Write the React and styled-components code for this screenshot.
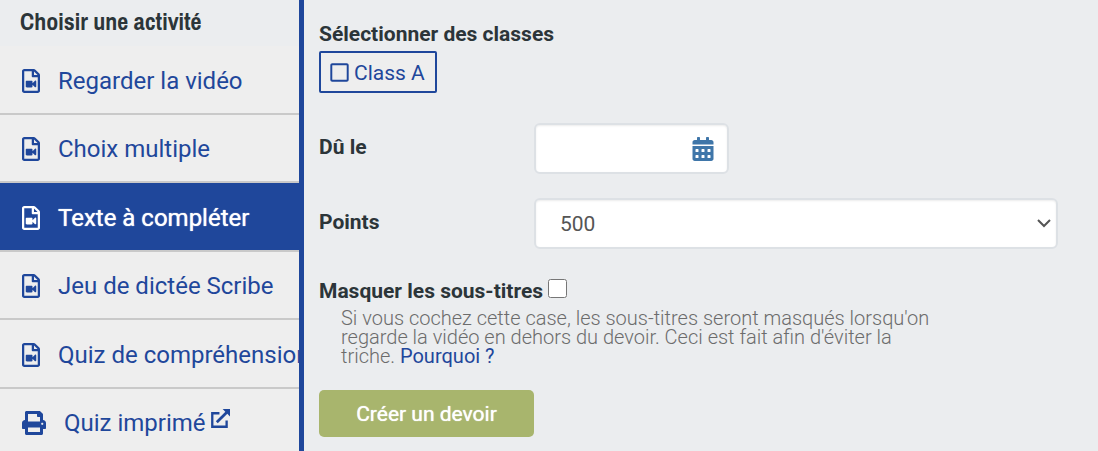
import { useState } from 'react';
import styled, { createGlobalStyle } from 'styled-components';
import { FaRegFileVideo, FaPrint, FaCalendarAlt, FaRegSquare, FaCheckSquare } from 'react-icons/fa';

const GlobalStyle = createGlobalStyle`
  * {
    box-sizing: border-box;
  }
  body {
    margin: 0;
    background: #ebedef;
    color: #2c3539;
    font-family: Roboto, "Liberation Sans", sans-serif;
    font-size: 21px;
  }
`

const Page = styled.div`
  display: flex;
  height: 100vh;
  overflow: hidden;
`

const Sidebar = styled.aside`
  flex: 0 0 304px;
  border-right: 5px solid #1f479b;
  overflow: hidden;
`

const SidebarTitle = styled.h2`
  margin: 0;
  padding: 7px 20px 11px;
  font-family: "Liberation Sans Narrow", "Archivo Narrow", sans-serif;
  font-size: 24px;
  font-weight: 700;
  line-height: 28px;
  white-space: nowrap;
`

const ActivityNav = styled.nav`
  display: grid;
  grid-auto-rows: 1fr;
  min-height: 411px;
`

const ActivityLink = styled.a`
  display: flex;
  align-items: center;
  gap: 18px;
  padding: 3px 0 0 22px;
  border-bottom: 2px solid #c9c9c9;
  background: ${({ $active }) => ($active ? '#1f479b' : '#eeeeee')};
  color: ${({ $active }) => ($active ? '#ffffff' : '#1f479b')};
  font-size: 24px;
  text-decoration: none;
  text-shadow: ${({ $active }) => ($active ? '0 0 1px #ffffff' : 'none')};
  white-space: nowrap;
`

const VideoIcon = styled(FaRegFileVideo)`
  flex: none;
  width: 18px;
  height: 24px;
`

const LinkText = styled.span`
  display: flex;
  gap: 5px;
`

const ExternalSvg = styled.svg`
  width: 19px;
  height: 19px;
`

const Main = styled.main`
  flex: 1;
  min-width: 0;
  padding: 20px 40px 14px 15px;
`

const ClassSet = styled.fieldset`
  margin: 0 0 30px;
  padding: 0;
  border: 0;
`

const Legend = styled.legend`
  padding: 0;
  font-weight: 700;
  line-height: 28px;
`

const ClassOption = styled.label`
  display: inline-flex;
  align-items: center;
  gap: 4px;
  height: 42px;
  margin-top: 3px;
  padding: 1px 10px 0 8px;
  border: 2px solid #1f479b;
  border-radius: 2px;
  background: #eeeeee;
  color: #1f479b;
  cursor: pointer;
`

const HiddenCheck = styled.input`
  appearance: none;
  width: 0;
  height: 0;
  margin: 0 -4px 0 0;
`

const Field = styled.div`
  display: grid;
  grid-template-columns: 215px 1fr;
  margin-bottom: 24px;
`

const FieldLabel = styled.label`
  padding-top: 10px;
  font-weight: 700;
  line-height: 28px;
`

const Box = styled.div`
  display: flex;
  align-items: center;
  width: ${({ $width }) => $width || '100%'};
  height: 51px;
  padding-right: ${({ $pad }) => $pad}px;
  border: 2px solid #dde1e5;
  border-radius: 6px;
  background: #ffffff;
  box-shadow: inset 0 1px 2px rgba(0, 0, 0, 0.08);
  color: #3f76a9;
`

const DateInput = styled.input`
  flex: 1;
  min-width: 0;
  height: 100%;
  padding: 0 12px;
  border: 0;
  background: transparent;
  font: inherit;
  color: #555555;
`

const PointsSelect = styled.select`
  appearance: none;
  flex: 1;
  min-width: 0;
  height: 100%;
  margin-right: -14px;
  padding: 0 24px;
  border: 0;
  background: transparent;
  font: inherit;
  color: #555555;
`

const Chevron = styled.svg`
  flex: none;
  width: 14px;
  height: 9px;
  pointer-events: none;
`

const CheckRow = styled.div`
  display: flex;
  align-items: center;
  gap: 5px;
  margin-top: 28px;
`

const CheckLabel = styled.label`
  font-weight: 700;
  line-height: 28px;
`

const Check = styled.input`
  width: 19px;
  height: 19px;
  margin: 0 0 5px;
`

const Help = styled.p`
  max-width: 612px;
  margin: 4px 0 24px;
  padding-left: 22px;
  color: #6c6c6c;
  font-size: 20px;
  font-weight: 300;
  line-height: 19px;
`

const HelpLink = styled.a`
  color: #1f479b;
  font-weight: 400;
  text-decoration: none;
`

const SubmitButton = styled.button`
  width: 215px;
  height: 47px;
  padding: 0;
  border: 0;
  border-radius: 5px;
  background: #a8b56d;
  color: #ffffff;
  font: inherit;
  text-shadow: 0 0 1px #ffffff;
  cursor: pointer;
`

const ExternalIcon = () => (
  <ExternalSvg viewBox="0 0 18 18" fill="none" stroke="currentColor" strokeWidth="2.2" aria-hidden="true">
    <path d="M8 4H1.2v12.8h13.6v-6" />
    <path d="M5.5 12.5L15 3" strokeWidth="2.6" />
    <path d="M11 0h7v7z" fill="currentColor" stroke="none" />
  </ExternalSvg>
);

const activities = [
  { name: 'Regarder la vidéo' },
  { name: 'Choix multiple' },
  { name: 'Texte à compléter' },
  { name: 'Jeu de dictée Scribe' },
  { name: 'Quiz de compréhension' },
  { name: 'Quiz imprimé', print: true },
];

const App = () => {
  const [active, setActive] = useState('Texte à compléter');
  const [classA, setClassA] = useState(false);

  return (
    <Page>
      <GlobalStyle />
      <Sidebar>
        <SidebarTitle>Choisir une activité</SidebarTitle>
        <ActivityNav>
          {activities.map(({ name, print }) => (
            <ActivityLink
              key={name}
              href="#"
              $active={active === name}
              onClick={() => setActive(name)}
            >
              {print ? <FaPrint size={24} /> : <VideoIcon />}
              <LinkText>
                {name}
                {print && <ExternalIcon />}
              </LinkText>
            </ActivityLink>
          ))}
        </ActivityNav>
      </Sidebar>
      <Main>
        <form onSubmit={(e) => e.preventDefault()}>
          <ClassSet>
            <Legend>Sélectionner des classes</Legend>
            <ClassOption>
              <HiddenCheck type="checkbox" checked={classA} onChange={() => setClassA(!classA)} />
              {classA ? <FaCheckSquare size={21} /> : <FaRegSquare size={21} />}
              Class A
            </ClassOption>
          </ClassSet>
          <Field>
            <FieldLabel htmlFor="due">Dû le</FieldLabel>
            <Box $width="195px" $pad={12}>
              <DateInput id="due" type="text" />
              <FaCalendarAlt size={24} />
            </Box>
          </Field>
          <Field>
            <FieldLabel htmlFor="points">Points</FieldLabel>
            <Box $pad={5}>
              <PointsSelect id="points" defaultValue="500">
                <option>100</option>
                <option>500</option>
                <option>1000</option>
              </PointsSelect>
              <Chevron viewBox="0 0 14 9" fill="none" stroke="#555555" strokeWidth="2" aria-hidden="true">
                <path d="M1 1l6 6 6-6" />
              </Chevron>
            </Box>
          </Field>
          <CheckRow>
            <CheckLabel htmlFor="hide">Masquer les sous-titres</CheckLabel>
            <Check id="hide" type="checkbox" />
          </CheckRow>
          <Help>
            Si vous cochez cette case, les sous-titres seront masqués lorsqu'on regarde la vidéo en
            dehors du devoir. Ceci est fait afin d'éviter la triche. <HelpLink href="#">Pourquoi ?</HelpLink>
          </Help>
          <SubmitButton type="submit">Créer un devoir</SubmitButton>
        </form>
      </Main>
    </Page>
  )
}

export default App;
